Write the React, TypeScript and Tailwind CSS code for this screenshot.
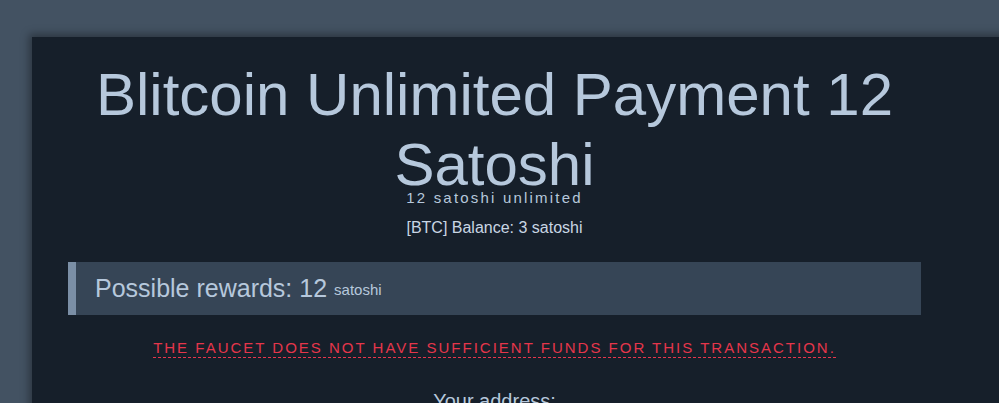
export default function App() {
  return (
    <div className="min-h-[403px] bg-[#435262] pl-[32px] pt-[37px] overflow-hidden font-['Liberation_Sans',Arial,sans-serif]">
      <div className="bg-[#161f2a] min-h-[366px] w-[1000px] shadow-[0_0_8px_3px_rgba(0,0,0,0.35)] pl-[36px] pt-[23px]">
        <div className="w-[853px] flex flex-col items-center">
          <h1 className="text-[60px] leading-[70px] text-[#b6c8dc] text-center font-normal">
            Blitcoin Unlimited Payment 12 Satoshi
          </h1>
          <p className="-mt-[10px] text-[15px] leading-[15px] tracking-[2.2px] text-[#b6c8dc]">
            12 satoshi unlimited
          </p>
          <p className="mt-[13px] text-[16px] leading-[20px] text-[#c9d6e4]">
            [BTC] Balance: 3 satoshi
          </p>
          <div className="mt-[24px] w-full h-[53px] bg-[#364556] border-l-[8px] border-[#7b8fa6] flex items-center pl-[19px]">
            <span className="text-[25px] text-[#b6c8dc]">Possible rewards: 12</span>
            <span className="ml-[7px] mt-[4px] text-[15px] text-[#b6c8dc]">satoshi</span>
          </div>
          <div className="mt-[23px] text-[15px] leading-[19px] tracking-[2px] uppercase text-[#e5364b] border-b border-dashed border-[#e5364b] font-['Liberation_Sans_Narrow','Liberation_Sans',Arial,sans-serif]">
            The faucet does not have sufficient funds for this transaction.
          </div>
          <p className="mt-[29px] text-[20px] leading-[28px] text-[#b6c8dc]">Your address:</p>
        </div>
      </div>
    </div>
  )
}
